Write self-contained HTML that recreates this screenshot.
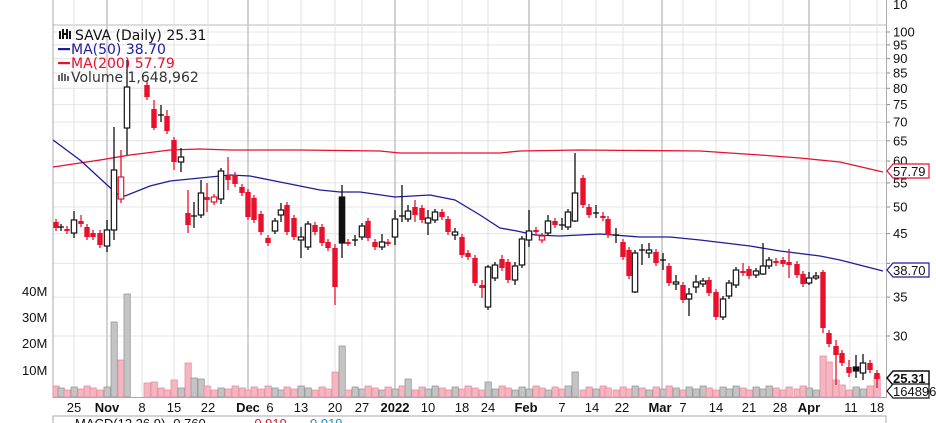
<!DOCTYPE html>
<html><head><meta charset="utf-8"><style>
body{margin:0;background:#fff;width:936px;height:423px;overflow:hidden}
svg{display:block;font-family:"Liberation Sans",Arial,sans-serif}
</style></head><body>
<svg id="s" width="936" height="423" viewBox="0 0 936 423" xmlns="http://www.w3.org/2000/svg"></svg>
<script>
var s=document.getElementById('s'),o='';
function Y(p){return 1194.8-252.5*Math.log(p);}
o+='<line x1="53" y1="25" x2="886" y2="25" stroke="#bbb"/>';
var pr=[100,95,90,85,80,75,70,65,60,55,50,45,40,35,30];
pr.forEach(function(p){var y=Y(p).toFixed(1);o+='<line x1="53" y1="'+y+'" x2="886" y2="'+y+'" stroke="#e4e4e4"/>';
 o+='<line x1="886" y1="'+y+'" x2="890" y2="'+y+'" stroke="#888"/>';
 if(p!=40)o+='<text x="893" y="'+(+y+4.5)+'" font-size="13" fill="#111">'+p+'</text>';});
o+='<text x="893" y="9" font-size="13" fill="#111">10</text>';
var vx=[74,107,142,174,208,248,268,301,335,362,395,428,462,488,529,562,596,623,662,683,716,749,783,809,850,877];
var mon=[107,248,395,529,662,809];
vx.forEach(function(x){var m=mon.indexOf(x)>=0;o+='<line x1="'+x+'" y1="0" x2="'+x+'" y2="398" stroke="'+(m?'#c4c4c4':'#e2e2e2')+'" stroke-width="'+(m?1.5:1)+'"/>';});
o+='<line x1="53" y1="0" x2="53" y2="398" stroke="#aaa"/><line x1="886.5" y1="0" x2="886.5" y2="398" stroke="#aaa"/><line x1="53" y1="397.5" x2="886" y2="397.5" stroke="#aaa"/>';
[['40M',292],['30M',318],['20M',344],['10M',371]].forEach(function(a){o+='<text x="22" y="'+(a[1]+4)+'" font-size="13" fill="#111">'+a[0]+'</text>';});
var C=[[56,222,228,'r'],[61,227,228,'c'],[67,229,231,'r'],[74,220,233,'h',211,238],[81,221,224,'r',215],[87,227,237,'r'],[93,233,237,'r'],[100,233,245,'r'],[107,230,246,'h',220,252],[114,170,230,'h',127,240],[121,177,199,'rh',150,203],[127,87,128,'h',60,155],[147,85,97,'r',80],[154,109,128,'r',100,130],[161,115,116,'c',105,122],[167,116,131,'r',110],[174,140,162,'r',137,170],[181,157,162,'h',148,172],[188,213,225,'r',190,233],[194,216,218,'c',202,228],[201,193,215,'h',180],[207,197,200,'r',183,212],[214,197,202,'rh'],[221,171,199,'h',168,204],[228,176,180,'r',157,190],[235,175,184,'r'],[242,187,193,'r'],[248,192,217,'r'],[254,198,220,'r'],[261,214,232,'r'],[268,238,243,'r'],[275,221,231,'h'],[281,210,215,'h',203,222],[287,205,232,'r'],[294,218,237,'r'],[301,237,240,'h',227,258],[308,224,247,'h'],[315,225,232,'r'],[322,227,243,'r'],[328,242,248,'r'],[335,248,287,'r',244,305],[342,197,243,'b',185,258],[348,242,243,'r'],
[355,240,241,'c',235,246],[362,226,237,'h'],[368,221,238,'r'],[375,242,247,'r'],[382,242,247,'h',234,250],[388,242,243,'r'],[395,219,237,'h',210,245],[402,216,217,'c',185,222],[408,211,219,'h',205,222],[415,207,215,'r',200,222],[422,208,220,'r'],[428,218,223,'h',210,235],[435,212,220,'h'],[442,212,217,'r'],[448,219,232,'r'],[455,232,235,'h',228,240],[462,237,255,'r'],[468,253,257,'r'],[475,258,283,'r'],[482,285,288,'r',280,298],[488,267,307,'h',265,310],[495,265,278,'h'],[502,259,268,'r',255],[508,262,280,'r'],[515,266,280,'h',262,285],[522,239,265,'h'],[529,231,240,'h',210,247],[536,230,232,'r'],[542,236,240,'rh'],[548,221,233,'h',215],[555,221,225,'r'],[562,225,226,'c',218,230],[568,212,227,'h'],[575,193,221,'h',153,222],[583,178,205,'r'],[589,207,215,'r',204],[596,213,214,'c',205,218],[603,216,218,'r',212],[608,219,235,'r'],[616,235,236,'c',228,243],[623,242,257,'r'],[629,250,276,'r'],[635,253,292,'h',250,293],[642,250,251,'c',244,265],[649,250,253,'h',243,258],[656,252,263,'r'],[663,260,261,'c',253,270],[669,266,283,'r'],[676,282,284,'h',275,290],[683,285,300,'r'],[689,294,299,'h',288,316],[696,282,287,'h',275,293],[703,281,284,'h'],[709,280,293,'r'],[716,292,317,'r'],[723,299,317,'h'],[729,283,296,'h'],[736,270,285,'h'],[743,271,272,'r',263,276],[749,269,276,'r'],[756,271,275,'h'],[763,266,274,'h',243,275],[769,260,266,'h'],[776,261,263,'r'],[783,260,264,'r'],[789,262,265,'r',249,278],[797,264,275,'r'],[803,274,284,'r'],[809,278,283,'h',272,285],[816,276,277,'h',272,280],[823,272,328,'r',270,333],[829,333,344,'r'],[836,346,355,'r',340,385],[842,353,363,'r'],[849,367,373,'r',360,377],[856,367,371,'b',355,378],[863,363,373,'h',354,380],[870,363,370,'r'],[877,373,379,'r',370,388]];
var V={114:322,121:360,127:294,134:357,141:380,147:383,154:382,161:388,167:390,174:380,181:388,188:363,194:378,201:379,207:386,214:390,221:388,335:372,342:346,408:379,488:382,575:372,823:356,829:362,836:380,877:376,842:385};
var vo='',co='';
C.forEach(function(c,i){var x=c[0],t=c[1],b=c[2],k=c[3];
 var up=(k=='h'||k=='b'||k=='c'&&i%2);
 var vy=V[x]||(386+((i*7)%5));
 vo+='<rect x="'+(x-3)+'" y="'+vy+'" width="6.3" height="'+(397-vy)+'" fill="'+(up?'#c4c4c4':'#f4b6c0')+'" stroke="'+(up?'#999':'#e88f9e')+'" stroke-width="0.8"/>';
 var wt=c[4]||t-3,wb=c[5]||b+3,col=(k=='r'||k=='rh')?'#e8102c':'#111';
 co+='<line x1="'+x+'" y1="'+wt+'" x2="'+x+'" y2="'+wb+'" stroke="'+col+'" stroke-width="1.3"/>';
 if(k=='c'){co+='<line x1="'+(x-3)+'" y1="'+t+'" x2="'+(x+3)+'" y2="'+t+'" stroke="'+col+'" stroke-width="1.3"/>';}
 else{var h=Math.max(b-t,2);var f=k=='r'?'#e8102c':k=='b'?'#111':'#fff';
 co+='<rect x="'+(x-2.7)+'" y="'+t+'" width="5.4" height="'+h+'" fill="'+f+'" stroke="'+col+'" stroke-width="'+(k=='r'?0:1.2)+'"/>';}
});
o+=vo;
o+='<polyline fill="none" stroke="#e8102c" stroke-width="1.3" points="53,167 100,160 130,155 170,150 200,149 230,150 300,150 380,151 400,153 500,153 520,151 580,150 700,151 760,155 800,158 840,162 883,172"/>';
o+='<polyline fill="none" stroke="#1c1c9c" stroke-width="1.3" points="53,140 80,160 105,183 117,194 125,196 150,186 170,181 200,178 230,175 250,176 280,182 320,190 340,192 360,192 395,197 430,195 455,200 480,215 500,228 517,231 535,235 560,236 600,234 640,237 670,237 700,240 750,246 780,251 820,256 840,260 883,271"/>';
o+=co;
o+='<g font-family="DejaVu Sans,sans-serif" font-size="14">';
o+='<rect x="59" y="31" width="2" height="8" fill="#111"/><rect x="62" y="29" width="2" height="10" fill="#111"/><rect x="66" y="29" width="2" height="10" fill="#111"/><rect x="69" y="31" width="2" height="8" fill="#111"/><rect x="62" y="33" width="6" height="2" fill="#111"/>';
o+='<text x="75" y="40" fill="#111">SAVA (Daily) 25.31</text>';
o+='<rect x="58" y="48" width="12" height="2.2" fill="#1c1c9c"/><text x="71" y="54" fill="#1c1c9c">MA(50) 38.70</text>';
o+='<rect x="58" y="62" width="12" height="2.2" fill="#e8102c"/><text x="71" y="68" fill="#e8102c">MA(200) 57.79</text>';
o+='<rect x="58" y="75" width="2" height="6" fill="#666"/><rect x="61" y="73" width="2" height="8" fill="#666"/><rect x="64" y="74" width="2" height="7" fill="#666"/><rect x="67" y="76" width="2" height="5" fill="#666"/><text x="71" y="82" fill="#333">Volume 1,648,962</text></g>';
function tag(y,txt,c,bold){o+='<path d="M887,'+y+' l6,-7 h36 v14 h-36 z" fill="#fff" stroke="'+c+'" stroke-width="'+(bold?1.5:1.2)+'"/><text x="893" y="'+(y+5)+'" font-size="13" fill="#111" '+(bold?'font-weight="bold"':'')+'>'+txt+'</text>';}
tag(171,'57.79','#e8102c');tag(270,'38.70','#1c1c9c');tag(378,'25.31','#111',true);tag(391,'164896','#111');
var D=[[74,'25'],[107,'Nov',1],[142,'8'],[174,'15'],[208,'22'],[248,'Dec',1],[270,'6'],[301,'13'],[335,'20'],[362,'27'],[395,'2022',1],[428,'10'],[462,'18'],[488,'24'],[526,'Feb',1],[562,'7'],[592,'14'],[622,'22'],[660,'Mar',1],[683,'7'],[716,'14'],[749,'21'],[780,'28'],[809,'Apr',1],[851,'11'],[877,'18']];
D.forEach(function(d){o+='<text x="'+d[0]+'" y="412" font-size="13" text-anchor="middle" fill="#111" '+(d[2]?'font-weight="bold" font-size="14"':'')+'>'+d[1]+'</text>';});
o+='<rect x="53" y="416" width="833" height="12" fill="none" stroke="#aaa"/>';
o+='<text x="75" y="428" font-size="13" fill="#111">MACD(12,26,9) -0.760</text><text x="250" y="428" font-size="13" fill="#e8102c">-0.919</text><text x="310" y="428" font-size="13" fill="#1e8fd0">0.919</text>';
s.innerHTML=o;
</script>
</body></html>
